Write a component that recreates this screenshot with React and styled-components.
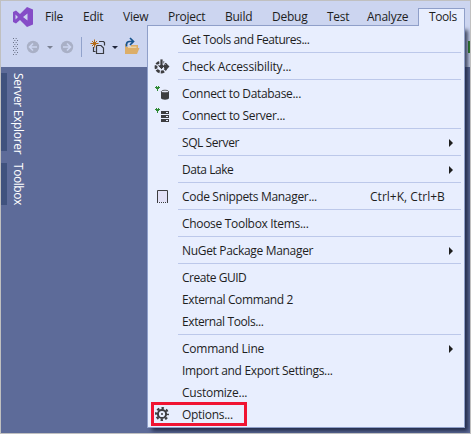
import React from "react";
import styled, { createGlobalStyle } from "styled-components";

const GlobalStyle = createGlobalStyle`
  * { box-sizing: border-box; }
  body { margin: 0; overflow: hidden; }
`;

const Window = styled.div`
  position: relative;
  width: 471px;
  height: 434px;
  border: 1px solid #c0c0c0;
  background: #5d6b99;
  color: #1e1e1e;
  font: 12px/16px "Open Sans", "Noto Sans", sans-serif;
  overflow: hidden;
`;

const Header = styled.header`
  height: 66px;
  background: #ccd5f0;
`;

const MenuBar = styled.nav`
  display: flex;
  height: 31px;
  padding: 7px 0 0 11px;
`;

const Logo = styled.svg`
  width: 22px;
  height: 22px;
  margin: -2px 1px 0 0;
`;

const MenuTitle = styled.div`
  flex: none;
  width: ${(p) => p.$width}px;
  height: 18px;
  padding-left: 10px;
  line-height: 17px;
  white-space: nowrap;
  letter-spacing: -0.25px;
`;

const ActiveTitle = styled(MenuTitle)`
  position: relative;
  z-index: 3;
  border: 1px solid #8f9fc9;
  border-bottom: 0;
  background: #e8eefe;
  line-height: 15px;
  letter-spacing: -0.4px;
`;

const ToolBar = styled.div`
  display: flex;
  height: 35px;
`;

const ToolIcons = styled.svg`
  width: 146px;
  height: 35px;
`;

const SideTabs = styled.aside`
  display: flex;
  flex-direction: column;
  gap: 12px;
  padding-top: 6px;
`;

const SideTab = styled.div`
  width: 25px;
  height: ${(p) => p.$height}px;
  border-left: 6px solid #40527e;
  padding-left: 3px;
  color: #fff;
  writing-mode: vertical-rl;
  line-height: 16px;
  white-space: nowrap;
  letter-spacing: ${(p) => p.$spacing}px;
`;

const Menu = styled.div`
  position: absolute;
  z-index: 2;
  left: 146px;
  top: 24px;
  width: 318px;
  height: 403px;
  padding: 3px 0;
  border: 1px solid #8f9fc9;
  background: #e8eefe;
  box-shadow: 4px 4px 4px -1px rgba(16, 24, 48, 0.75);
`;

const MenuItem = styled.div`
  display: grid;
  grid-template-columns: 34px 188px 1fr 16px;
  align-items: center;
  height: 22px;
  white-space: nowrap;
`;

const ItemLabel = styled.span`
  letter-spacing: ${(p) => p.$spacing ?? -0.2}px;
`;

const Shortcut = styled.span`
  letter-spacing: 0.02px;
`;

const Separator = styled.div`
  height: 5px;
  margin: 0 3px 0 30px;
  border-top: 1px solid #e8eefe;
  background: linear-gradient(#bcc8ea 1px, transparent 1px);
`;

const ItemIcon = styled.svg`
  width: 18px;
  height: 20px;
  margin-left: 6px;
`;

const Arrow = styled.svg`
  width: 5px;
  height: 8px;
`;

const Highlight = styled.div`
  position: absolute;
  left: 3px;
  top: 376px;
  width: 96px;
  height: 24px;
  border: 3px solid #f01432;
`;

const GreenEdge = styled.div`
  position: absolute;
  left: 467px;
  top: 40px;
  width: 2px;
  height: 12px;
  background: #35852f;
`;

const titles = [
  ["File", 38],
  ["Edit", 40],
  ["View", 45],
  ["Project", 57],
  ["Build", 47],
  ["Debug", 55],
  ["Test", 40],
  ["Analyze", 61],
];

const items = [
  { label: "Get Tools and Features...", spacing: -0.43 },
  null,
  { label: "Check Accessibility...", icon: "accessibility", spacing: -0.18 },
  null,
  { label: "Connect to Database...", icon: "database", spacing: -0.33 },
  { label: "Connect to Server...", icon: "server", spacing: -0.31 },
  null,
  { label: "SQL Server", sub: true, spacing: -0.42 },
  null,
  { label: "Data Lake", sub: true, spacing: -0.45 },
  null,
  { label: "Code Snippets Manager...", icon: "snippet", keys: "Ctrl+K, Ctrl+B", spacing: -0.32 },
  null,
  { label: "Choose Toolbox Items...", spacing: -0.31 },
  null,
  { label: "NuGet Package Manager", sub: true, spacing: -0.32 },
  null,
  { label: "Create GUID", spacing: -0.48 },
  { label: "External Command 2", spacing: -0.35 },
  { label: "External Tools...", spacing: -0.4 },
  null,
  { label: "Command Line", sub: true, spacing: -0.24 },
  { label: "Import and Export Settings...", spacing: -0.31 },
  { label: "Customize...", spacing: -0.24 },
  { label: "Options...", icon: "gear", spacing: -0.3 },
];

const plug = (
  <path d="M2 2h1v1h1v-1h1v1h1v1h-1v1h-1v2h-1v-2h-1v-1h-1v-1h1z" fill="#2f8a35" />
);

/* Drawn on an 18 by 20 canvas whose origin is the icon column's left edge. */
const icons = {
  accessibility: (
    <>
      <circle cx="7" cy="10" r="5" fill="none" stroke="#3d3d40" strokeWidth="2.800" strokeDasharray="3.400 1.100" />
      <path d="M6 2h3v6h3l-4.500 4.500L3 8h3z" fill="#3d3d40" stroke="#e8eefe" strokeWidth=".8" />
      <path d="M10 8h2V6l3.500 3.500L12 13v-2h-2z" fill="#3d3d40" />
    </>
  ),
  database: (
    <>
      {plug}
      <path d="M7 7.500v6.500c0 2.200 8 2.200 8 0V7.500z" fill="#3d3d40" />
      <ellipse cx="11" cy="7.500" rx="3.600" ry="1.300" fill="#e4e6f4" stroke="#3d3d40" strokeWidth=".8" />
    </>
  ),
  server: (
    <>
      {plug}
      <path d="M7 5h8v3H7zM7 9h8v3H7zM7 13h8v3H7z" fill="#3d3d40" />
      <path d="M12 6.500h2M12 10.500h2M12 14.500h2" stroke="#e8eefe" />
    </>
  ),
  snippet: (
    <>
      <path d="M3.500 15V3.500h10V15" fill="#e2e1f7" stroke="#3d3d40" />
      <path d="M3 15.500h11" stroke="#3d3d40" strokeDasharray="1 1" />
    </>
  ),
  gear: (
    <>
      <circle cx="8" cy="9" r="4.100" fill="none" stroke="#3d3d40" strokeWidth="2" />
      <circle cx="8" cy="9" r="5.900" fill="none" stroke="#3d3d40" strokeWidth="2.200" strokeDasharray="2.400 2.234" strokeDashoffset="1.200" />
      <circle cx="8" cy="9" r="1" fill="#3d3d40" />
    </>
  ),
};

function HistoryButton({ x, flip }) {
  return (
    <g transform={`translate(${x} 15)`}>
      <circle r="6.200" fill="#a9b0c6" />
      <path
        d="M4 0h-7M0-3.500L-3.500 0 0 3.500"
        transform={flip ? "scale(-1 1)" : undefined}
        fill="none"
        stroke="#ccd5f0"
        strokeWidth="1.600"
      />
    </g>
  );
}

function ToolStrip() {
  const dots = [];
  for (let y = 0; y < 9; y++) {
    for (let x = y % 2; x < 4; x += 2) {
      dots.push(<rect key={`${x}-${y}`} x={12 + x * 1.33} y={6 + y * 2} width="1" height="1" fill="#6b7288" />);
    }
  }
  return (
    <ToolIcons viewBox="0 0 146 35">
      {dots}
      <HistoryButton x={32} />
      <path d="M46 14h6l-3 3z" fill="#7b8193" />
      <HistoryButton x={66} flip />
      <path d="M80.500 5v20" stroke="#91a2cb" />
      <path d="M98 9.500h4.500l1 1v3M92.500 15v4.500h2M95.500 13.500h4.500l2.500 2.500v5.500h-7z" fill="none" stroke="#393a40" strokeWidth="1.200" />
      <path d="M93.500 7.500v8M89.500 11.500h8M91 9l5 5M96 9l-5 5" stroke="#b36a17" />
      <path d="M111 14h6l-3 3z" fill="#20263a" />
      <path d="M124 13v-1h1v3h5v-2h7v3h1.500l-2.500 6h-12z" fill="#dcae68" />
      <path d="M127 14.500h8.500v1.500H127z" fill="#ecd2a5" />
      <path d="M125.500 14.500v-2q0-3 3-3h3M129 6l3.500 3.500-3.500 3.500" fill="none" stroke="#17538c" strokeWidth="1.700" />
    </ToolIcons>
  );
}

export default function App() {
  return (
    <Window>
      <GlobalStyle />
      <Header>
        <MenuBar>
          <Logo viewBox="0 0 22 22">
            <path
              fillRule="evenodd"
              fill="#854cc7"
              d="M15 1l6 2.500v15L15 21l-7-7-4 3.500-3-1.500V6l3-1.500L8 8zM15.500 7.500L11 11l4.500 3.500zM3.500 8.500v5L6 11z"
            />
          </Logo>
          {titles.map(([text, width]) => (
            <MenuTitle key={text} $width={width}>{text}</MenuTitle>
          ))}
          <ActiveTitle $width={47}>Tools</ActiveTitle>
        </MenuBar>
        <ToolBar>
          <ToolStrip />
        </ToolBar>
      </Header>
      <SideTabs>
        <SideTab $height={78} $spacing={-0.32}>Server Explorer</SideTab>
        <SideTab $height={42} $spacing={-0.45}>Toolbox</SideTab>
      </SideTabs>
      <GreenEdge />
      <Menu>
        {items.map((item, i) =>
          item ? (
            <MenuItem key={i}>
              {item.icon ? <ItemIcon viewBox="0 0 18 20">{icons[item.icon]}</ItemIcon> : <span />}
              <ItemLabel $spacing={item.spacing}>{item.label}</ItemLabel>
              <Shortcut>{item.keys}</Shortcut>
              {item.sub && (
                <Arrow viewBox="0 0 5 8">
                  <path d="M1 0l4 4-4 4z" fill="#1e1e1e" />
                </Arrow>
              )}
            </MenuItem>
          ) : (
            <Separator key={i} />
          )
        )}
        <Highlight />
      </Menu>
    </Window>
  );
}
